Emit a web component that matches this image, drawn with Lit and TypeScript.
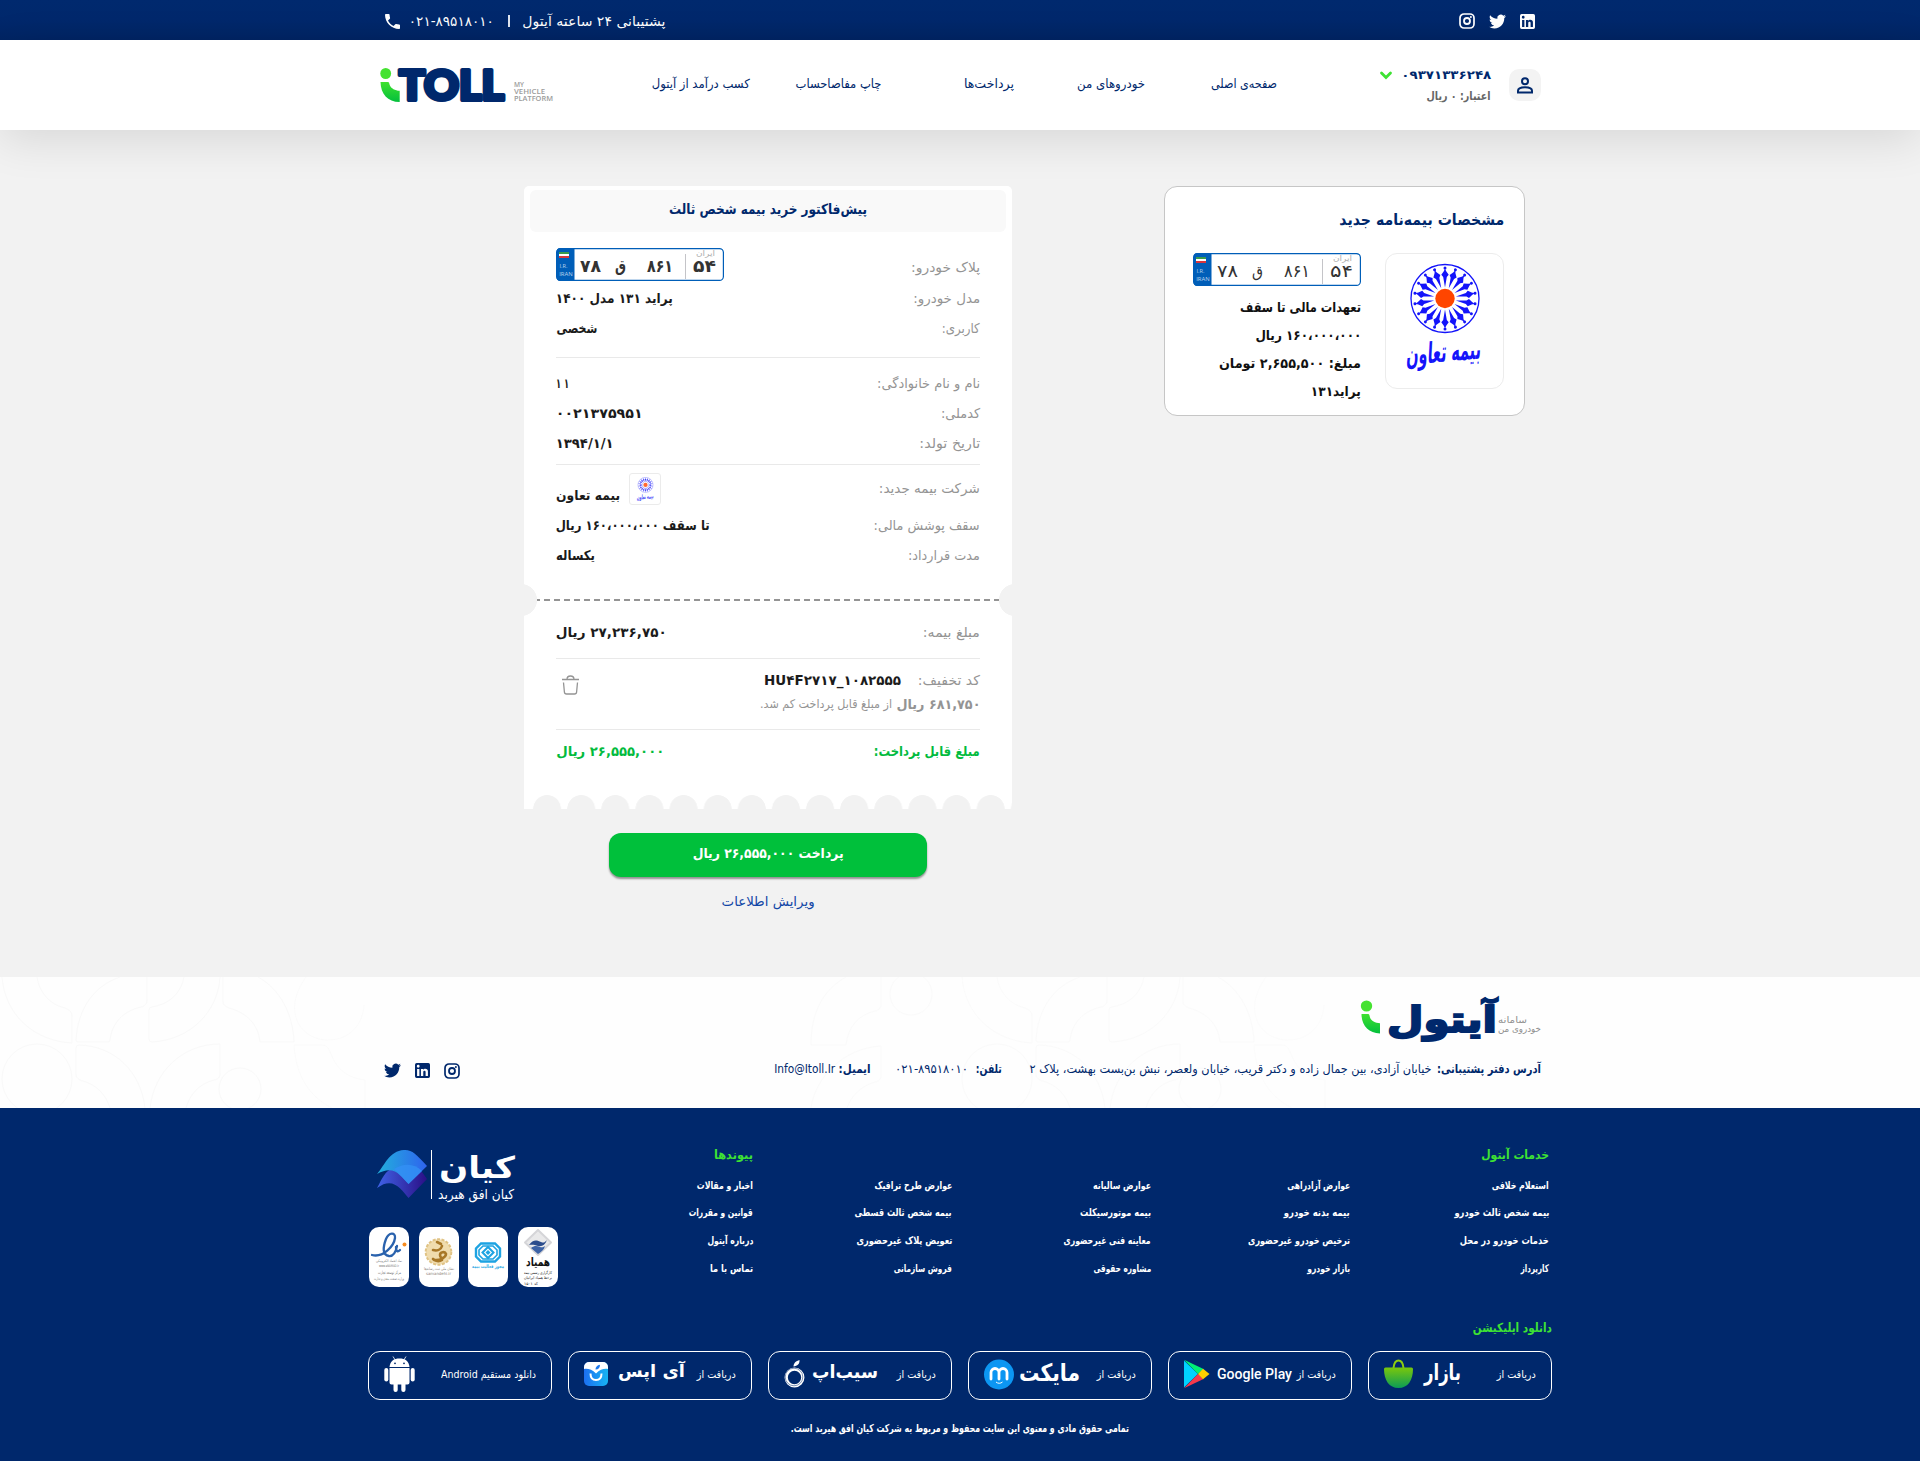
import { LitElement, html, css, svg } from "lit";
import { customElement, property } from "lit/decorators.js";

/** Single line of text condensed or widened to an exact measure. */
@customElement("fit-text")
class FitText extends LitElement {
  @property({ type: Number }) w = 0;

  static styles = css`
    :host { display: inline-flex; justify-content: center; flex: none; white-space: nowrap; }
    .inner { flex: none; display: inline-block; transform-origin: 50% 50%; }
  `;

  updated() {
    const inner = this.renderRoot.querySelector(".inner") as HTMLElement;
    this.style.width = `${this.w}px`;
    inner.style.transform = "none";
    const natural = inner.getBoundingClientRect().width;
    if (natural > 0) inner.style.transform = `scaleX(${this.w / natural})`;
  }

  render() {
    return html`<span class="inner"><slot></slot></span>`;
  }
}

const fit = (w: number, text: string, cls = "") => html`<fit-text class=${cls} .w=${w}>${text}</fit-text>`;

/** SVG text set to a fixed length, starting at its left edge. */
const label = (x: number, y: number, w: number, size: number, text: string, cls = "") =>
  svg`<text class=${"t " + cls} x=${x + w / 2} y=${y} font-size=${size} text-anchor="middle" textLength=${w} lengthAdjust="spacingAndGlyphs">${text}</text>`;

const twitter = html`<svg class="ico" width="17" height="17" viewBox="0 0 24 24"><path fill="currentColor" d="M23.953 4.57a10 10 0 01-2.825.775 4.958 4.958 0 002.163-2.723c-.951.555-2.005.959-3.127 1.184a4.92 4.92 0 00-8.384 4.482C7.69 8.095 4.067 6.13 1.64 3.162a4.822 4.822 0 00-.666 2.475c0 1.71.87 3.213 2.188 4.096a4.904 4.904 0 01-2.228-.616v.06a4.923 4.923 0 003.946 4.827 4.996 4.996 0 01-2.212.085 4.936 4.936 0 004.604 3.417 9.867 9.867 0 01-6.102 2.105c-.39 0-.779-.023-1.17-.067a13.995 13.995 0 007.557 2.209c9.053 0 13.998-7.496 13.998-13.985 0-.21 0-.42-.015-.63A9.935 9.935 0 0024 4.59z"/></svg>`;
const linkedin = html`<svg class="ico" width="15" height="15" viewBox="3 3 18 18"><path fill="currentColor" fill-rule="evenodd" d="M19 3a2 2 0 0 1 2 2v14a2 2 0 0 1-2 2H5a2 2 0 0 1-2-2V5a2 2 0 0 1 2-2h14m-.5 15.500v-5.300a3.260 3.260 0 0 0-3.260-3.260c-.85 0-1.840.52-2.320 1.300v-1.110h-2.790v8.370h2.790v-4.930c0-.77.62-1.400 1.390-1.400a1.400 1.400 0 0 1 1.400 1.400v4.930h2.790M6.880 8.560a1.680 1.680 0 0 0 1.680-1.680c0-.93-.75-1.690-1.680-1.690a1.690 1.690 0 0 0-1.690 1.690c0 .93.76 1.680 1.690 1.680m1.390 9.940v-8.370H5.500v8.370h2.770z"/></svg>`;
const instagram = html`<svg class="ico" width="16" height="16" viewBox="0 0 16 16" fill="none" stroke="currentColor"><rect x="1" y="1" width="14" height="14" rx="4" stroke-width="1.700"/><circle cx="8" cy="8" r="3" stroke-width="1.800"/><circle cx="11.900" cy="4.100" r="1" fill="currentColor" stroke="none"/></svg>`;
const phoneIcon = html`<svg class="ico" width="15" height="15" viewBox="3 3 18 18"><path fill="currentColor" d="M6.620 10.790c1.440 2.830 3.760 5.140 6.590 6.590l2.200-2.200c.27-.27.67-.36 1.020-.24 1.120.37 2.330.57 3.570.57.55 0 1 .45 1 1V20c0 .55-.45 1-1 1-9.390 0-17-7.610-17-17 0-.55.45-1 1-1h3.500c.55 0 1 .45 1 1 0 1.250.2 2.450.57 3.570.11.35.03.74-.25 1.020l-2.200 2.200z"/></svg>`;

const greenGradient = (id: string) => svg`<linearGradient id=${id} x1="0" y1="0" x2="0" y2="1"><stop offset="0" stop-color="#3fe12e"/><stop offset="1" stop-color="#03bf3c"/></linearGradient>`;

const logoEn = html`<svg class="ico" width="174" height="36" viewBox="0 0 174 36">
  <defs>${greenGradient("ge")}</defs>
  <ellipse cx="5.700" cy="6.500" rx="5.400" ry="5.600" fill="#45e231"/>
  <path d="M.5 15h7.200c1.800 0 1.300 1 2 3 1.400 3.600 5.400 5.600 10 5.800V35C7.500 35 .8 27 .5 15z" fill="url(#ge)"/>
  ${label(19, 33, 105, 41, "TOLL", "brand")}
  <g fill="#9b9b9b">
    ${label(134, 20, 10, 7, "MY", "tag")}${label(134, 27.200, 31, 7, "VEHICLE", "tag")}${label(134, 34.400, 39, 7, "PLATFORM", "tag")}
  </g>
</svg>`;

const logoFa = html`<svg class="ico" width="181" height="42" viewBox="0 0 181 42">
  <defs>${greenGradient("gf")}</defs>
  <ellipse cx="6.500" cy="5" rx="5.700" ry="5.600" fill="#45e231"/>
  <path d="M1.500 13H8c1.700 0 1.300 1.500 2 3.500 1.200 3.400 5.200 5.300 10 5.800V32.500C8.500 32 1.500 24.500 1.500 13z" fill="url(#gf)"/>
  ${label(27, 30.500, 110, 36, "آیتول", "brand-fa")}
  <g fill="#8f8f8f">${label(138, 22, 29, 9, "سامانه", "thin")}${label(138, 31, 43, 9, "خودروی من", "thin")}</g>
</svg>`;

const plate = (cls: string) => html`<svg class=${"plate " + cls} width="168" height="33" viewBox="0 0 168 33">
  <rect x=".6" y=".6" width="166.800" height="31.800" rx="4" fill="#fff" stroke="#005eb8" stroke-width="1.200"/>
  <path d="M18.500 0H4.500a4 4 0 0 0-4 4v25a4 4 0 0 0 4 4h14z" fill="#005eb8"/>
  <path d="M3 4h10v2H3z" fill="#3a9b4e"/><path d="M3 6h10v2H3z" fill="#fff"/><path d="M3 8h10v2H3z" fill="#d8363c"/>
  <g fill="#b9d3ec">${label(3.500, 19.500, 8, 5.500, "I.R.", "lat")}${label(3.200, 28, 13.500, 5.500, "IRAN", "lat")}</g>
  <g class="digits">
    ${label(24, 24, 21, 17, "۷۸")}${label(59, 24, 11, 16, "ق")}${label(91, 24, 26, 17, "۸۶۱")}${label(137, 24, 23, 17, "۵۴")}
  </g>
  <path d="M129.500 6v25" stroke="#c4c4c8"/>
  <g fill="#adadad">${label(140, 8, 19, 8, "ایران", "thin")}</g>
</svg>`;

const spokes = Array.from({ length: 18 }, (_, i) => i * 20);
const taavon = (cls: string) => html`<svg class=${cls} viewBox="0 0 76 108">
  <circle cx="38" cy="35.500" r="34" fill="none" stroke="#1414fa" stroke-width="1.300"/>
  ${spokes.map((a) => svg`<g transform=${`rotate(${a} 38 35.5) translate(-1 -.5)`} fill="#1414fa"><path d="M39 25l-1.800-10.500-1.900-2.200 2.500-3.600L39 6l1.200 2.700 2.500 3.600-1.900 2.200z"/><circle cx="39" cy="5.500" r="1.500"/></g>`)}
  <circle cx="38" cy="35.500" r="9.700" fill="#ff4500"/>
  <g fill="#1414fa" transform="translate(-1 102) skewX(-8) rotate(-5)">${label(0, 0, 74, 29, "بیمه تعاون", "callig")}</g>
</svg>`;

const row = (lw: number, l: string, vw: number, v: string, cls = "") => html`
  <div class=${"row " + cls}><span class="key">${fit(lw, l)}</span><span class="val">${fit(vw, v)}</span></div>`;

const nav: [string, number][] = [
  ["صفحه‌ی اصلی", 66], ["خودروهای من", 68], ["پرداخت‌ها", 50], ["چاپ مفاصاحساب", 86], ["کسب درآمد از آیتول", 98],
];

const columns: { title?: [string, number]; links: [string, number][] }[] = [
  { title: ["خدمات آیتول", 68], links: [["استعلام خلافی", 57], ["بیمه شخص ثالث خودرو", 95], ["خدمات خودرو در محل", 89], ["کارپرداز", 28]] },
  { links: [["عوارض آزادراهی", 63], ["بیمه بدنه خودرو", 66], ["ترخیص خودرو غیرحضوری", 102], ["بازار خودرو", 43]] },
  { links: [["عوارض سالیانه", 58], ["بیمه موتورسیکلت", 71], ["معاینه فنی غیرحضوری", 87], ["مشاوره حقوقی", 58]] },
  { links: [["عوارض طرح ترافیک", 78], ["بیمه شخص ثالث قسطی", 97], ["تعویض پلاک غیرحضوری", 96], ["فروش سازمانی", 58]] },
  { title: ["پیوندها", 39], links: [["اخبار و مقالات", 56], ["قوانین و مقررات", 64], ["درباره آیتول", 46], ["تماس با ما", 43]] },
];

const pattern = html`<svg class="pattern" width="1920" height="131" viewBox="0 0 1920 131" fill="none" stroke="#f9f9f9">
  ${[0, 1].map((k) => svg`<g transform=${`translate(${k * 960} 0)`} opacity=${k ? 0.6 : 1}>
    <circle cx="37" cy="102" r="35"/>
    <path d="M2 0c3 38 32 64 70 66V40c0-5-2-7-7-9C50 28 39 15 37 0"/>
    <path d="M76 63c2-32 18-54 44-63M147 0v22c0 5-2 7-6 8-18 4-29 16-31 33q0 2-2 2H78q-2 0-2-2"/>
    <path d="M184 0c-3 16-14 27-32 30q-3 0-3 3v29q0 3 3 3c38-2 66-30 68-65"/>
    <path d="M223 0v24c0 4 2 5 6 7 18 5 29 16 31 34h34c-1-28-14-53-36-65"/>
    <path d="M145 131c-4-36-30-62-66-63q-3 0-3 3v26c0 4 3 6 7 7 14 4 23 14 27 27"/>
    <path d="M150 131c4-36 32-64 70-64v29c0 5-2 6-6 7-15 4-24 14-28 28"/>
    <circle cx="240" cy="112" r="21"/>
    <path opacity=".6" d="M306 0c-25 35-5 63 22 63 22 0 35-16 36-35"/>
    <path opacity=".6" d="M294 68h28c5 0 7 4 9 9 6 16 17 24 34 26v28M294 68c2 32 16 52 38 63"/>
  </g>`)}
  <g opacity=".6"><circle cx="911" cy="17" r="21"/><path d="M811 68h35c2-18 12-30 29-34 4-1 6-3 6-7V0M811 68c0-33 12-55 35-68"/><path d="M811 131c4-30 32-60 70-62v30c0 3-2 5-6 6-14 4-24 14-28 26"/></g>
</svg>`;

const android = html`<svg class="ico" width="31" height="36" viewBox="0 0 31 36" fill="#fff">
  <path d="M5.500 11C6 5 10 2.500 15.500 2.500S25 5 25.500 11z"/><path d="M9 .5l2.500 4M22 .5l-2.500 4" stroke="#fff" stroke-width=".8"/>
  <path d="M5.500 12h20v14.500a2 2 0 0 1-2 2h-2V34a2.100 2.100 0 0 1-4.200 0v-5.500h-3.600V34a2.100 2.100 0 0 1-4.200 0v-5.500h-2a2 2 0 0 1-2-2z"/>
  <rect x=".3" y="12" width="4" height="13.500" rx="2"/><rect x="26.700" y="12" width="4" height="13.500" rx="2"/>
  <circle cx="11" cy="7.300" r=".9" fill="#00286c"/><circle cx="20" cy="7.300" r=".9" fill="#00286c"/>
</svg>`;
const iapps = html`<svg class="ico" width="102" height="26" viewBox="0 0 102 26">
  <defs><linearGradient id="ia" x1="0" x2="1"><stop stop-color="#1c6ff0"/><stop offset="1" stop-color="#17b4f3"/></linearGradient></defs>
  <rect y="1" width="24" height="24" rx="5" fill="url(#ia)"/><path d="M5 1h14a5 5 0 0 1 5 5v2c-4-.6-8 .4-12 4.500C8 8.400 4 7.400 0 8V6a5 5 0 0 1 5-5z" fill="#fff"/>
  <path d="M6.500 12.500c0 4 2 6.500 5.500 6.500s5.500-2.500 5.500-6.500" fill="none" stroke="#fff" stroke-width="2"/><path d="M11.500 8.500c0-2.500 1.500-4.300 4.500-4.800 0 3-1.500 4.800-4.500 4.800z" fill="#1b78f0"/>
  <g fill="#fff">${label(34, 16, 67, 17, "آی اپس", "mark")}</g>
</svg>`;
const sibapp = html`<svg class="ico" width="94" height="28" viewBox="0 0 94 28">
  <circle cx="10.500" cy="17.500" r="8.300" fill="none" stroke="#fff" stroke-width="3.300"/><circle cx="10" cy="17" r="8.800" fill="none" stroke="#00286c" stroke-width=".5"/><path d="M9.500 6.500C9.500 3 12 1 15.500 0c.2 4-2 6-6 6.500z" fill="#fff"/>
  <g fill="#fff">${label(28, 18, 66, 18, "سیب‌اپ", "mark")}</g>
</svg>`;
const myket = html`<svg class="ico" width="97" height="31" viewBox="0 0 97 31">
  <circle cx="15" cy="15.500" r="15" fill="#0c96f2"/><path d="M7 20v-6.500a4 4 0 0 1 8 0V20M15 13.500a4 4 0 0 1 8 0V20" fill="none" stroke="#fff" stroke-width="2.800" stroke-linecap="round"/><path d="M12 23c2 1.700 4.500 1.700 6.500 0" fill="none" stroke="#fff" stroke-width="1"/>
  <g fill="#fff">${label(35, 22, 61, 24, "مایکت", "mark")}</g>
</svg>`;
const google = html`<svg class="ico" width="108" height="30" viewBox="0 0 108 30">
  <path d="M0 1.500v27L14 15z" fill="#00d2ff"/><path d="M0 .8L19.500 10 14 15z" fill="#00f076"/><path d="M0 29.200L19.500 20 14 15z" fill="#f5394b"/><path d="M19 9.800l6.500 5.200-6.500 5.200-5-5.200z" fill="#ffcf00"/>
  <g fill="#fff">${label(33, 19.500, 75, 14.700, "Google Play", "gp")}</g>
</svg>`;
const bazaar = html`<svg class="ico" width="78" height="30" viewBox="0 0 78 30">
  <defs><linearGradient id="bz" x1="0" x2="0" y1="0" y2="1"><stop stop-color="#7ac70c"/><stop offset="1" stop-color="#0b9d56"/></linearGradient></defs>
  <path d="M9.500 9C10 4 11.500 1.500 14.500 1.500S19 4 19.500 9" fill="none" stroke="#8ccf10" stroke-width="2"/>
  <path d="M1.500 8.500h26q1.500 0 1.500 1.500C29 21 24 29 14.500 29S0 21 0 10q0-1.500 1.500-1.500z" fill="url(#bz)"/>
  <g fill="#fff">${label(40, 20.500, 37, 23, "بازار", "mark")}</g>
</svg>`;

const kian = html`<svg class="kian" width="140" height="56" viewBox="0 0 140 56">
  <defs>
    <linearGradient id="k1" x1="0" x2="1"><stop stop-color="#22b0dd"/><stop offset="1" stop-color="#2f63ee"/></linearGradient>
    <linearGradient id="k2" x1="0" x2="1"><stop stop-color="#3f62e6"/><stop offset="1" stop-color="#2b0f86"/></linearGradient>
  </defs>
  <path d="M0 39c5-9 8-18 17-20 8-6 18-6 23-3l10 14-18.500 19C24 40 16 27 0 39z" fill="url(#k2)"/>
  <path d="M0 25C8 16 12 2 27 1c8-.5 12 4 23 16L31.500 35C24 27 17 15 0 25z" fill="url(#k1)"/>
  <path d="M17 20c10-6 20-6 28 2L31.500 35z" fill="#3390f5" opacity=".8"/>
  <path d="M54.500 1v49" stroke="#fff" stroke-width="1"/>
  <g fill="#fff">${label(62, 29, 76, 30, "کیان", "mark")}${label(61, 50, 76, 13.500, "کیان افق هیربد", "mid")}</g>
</svg>`;

const badges = [
  html`<svg class="badge" width="40" height="60" viewBox="0 0 40 60"><path d="M20 3l13 12.500L20 28 7 15.500z" fill="#e9e9ea" stroke="#d5d5d8" stroke-linejoin="round" stroke-width="2"/><path d="M11 18c4-6 8-5 12-3 3 1.500 4 0 6-2-2 5-5 7-9 6-4-1.500-6-1.500-9-1z" fill="#2b4c8c"/><path d="M13 21c4-3 6-2 9-1 2 .6 3 .3 5-1-1 4-4 6-7 8z" fill="#3c62a6"/>
    <g fill="#111">${label(8, 39, 24, 12, "همیاد", "mark")}${label(6, 47, 28, 4, "کارگزاری رسمی بیمه")}${label(6, 52, 28, 4, "برخط همیاد ایرانیان")}${label(6, 57.500, 14, 4, "کد ۱۵۰۱")}</g></svg>`,
  html`<svg class="badge" width="40" height="60" viewBox="0 0 40 60"><g fill="none" stroke="#1da3e2" stroke-width="2.400"><path d="M13 16.500H27l5 5v8l-5 5H13l-5-5v-8z"/><path d="M15 19H25l4 4v5l-4 4H15l-4-4v-5z" stroke-width="1.600"/><path d="M20 20l5.500 5.500L20 31l-5.500-5.500z" fill="#fff" stroke-width="2"/></g><path d="M20 23l2.500 2.500L20 28l-2.500-2.500z" fill="#1da3e2"/>
    <g fill="#35ade6" class="bold">${label(4, 41, 32, 5, "مجوز فعالیت بیمه")}</g></svg>`,
  html`<svg class="badge" width="40" height="60" viewBox="0 0 40 60"><circle cx="19.500" cy="25" r="12.800" fill="#f0dcae" stroke="#e0c385" stroke-width="2" stroke-dasharray="3 1.500"/><path d="M18 15l4 2M14 23c4 1 8 0 9-4M15 33c6 1 12-3 12-6-1-3-6-2-6 1s3 3 2 5c-3 2-7 1-9-1" fill="none" stroke="#a87828" stroke-width="2.600" stroke-linecap="round"/>
    <g fill="#8b8378">${label(5, 43, 30, 4, "نشان ملی ثبت رسانه‌ها")}${label(7, 48, 25, 4, "samandehi.ir")}</g></svg>`,
  html`<svg class="badge" width="40" height="60" viewBox="0 0 40 60"><path d="M3 28c11 3 22-9 23-17 .6-6-6-6-9 1-3 8-4 16 3 17 5 .5 7-5 8-10M27 20c0 5 2 5 4 3" fill="none" stroke="#2a62ad" stroke-width="2.300" stroke-linecap="round"/><circle cx="35.500" cy="17.500" r="2" fill="#f58a1f"/>
    <g fill="#777">${label(7, 35, 26, 3.500, "نماد اعتماد الکترونیکی")}${label(10, 39.500, 20, 3.500, "www.eNAMAD.ir")}${label(9, 47, 23, 4.500, "مرکز توسعه تجارت")}${label(5, 53, 30, 4, "وزارت صنعت، معدن و تجارت")}</g></svg>`,
];

@customElement("app-root")
class AppRoot extends LitElement {
  static styles = css`
    :host { display: block; width: 1920px; height: 1461px; direction: rtl; overflow: hidden; background: #f2f2f2;
      font-family: "DejaVu Sans", "Noto Sans", sans-serif; font-size: 13px; color: #00286c; }
    * { box-sizing: border-box; }
    svg { display: block; flex: none; direction: ltr; overflow: visible; }
    .t { font-family: "DejaVu Sans", sans-serif; }
    .brand { font-family: "Lato", "Inter", sans-serif; font-weight: 900; fill: #00286c; stroke: #00286c; stroke-width: 4; stroke-linejoin: round; }
    .tag { font-family: "Open Sans", sans-serif; font-weight: 600; }
    .brand-fa { font-weight: 700; fill: #00286c; stroke: #00286c; stroke-width: 2; }
    .mark { font-weight: 700; }
    .callig { font-weight: 700; }
    .lat { font-family: "Open Sans", sans-serif; }
    .gp { font-family: Roboto, "Open Sans", sans-serif; font-weight: 500; }
    .bold { font-weight: 700; }

    .topbar { height: 40px; background: linear-gradient(#00296e, #00286c 50%, #002463); color: #fff; }
    .wrap { width: 1162px; margin: 0 auto; display: flex; align-items: center; }
    .topbar .wrap { height: 40px; padding: 2px 6px 0 6px; justify-content: space-between; }
    .cluster { display: flex; align-items: center; gap: 14px; }
    .support { display: flex; align-items: center; font-size: 13.500px; }
    .support .sep { margin: 0 13px 0 14px; width: 1.500px; height: 12px; background: #dfe5ef; }
    .support .num { margin-left: 9px; direction: ltr; }

    .header { height: 90px; background: #fff; position: relative; box-shadow: 0 10px 45px rgba(0, 0, 0, .11); }
    .header .wrap { height: 90px; }
    .avatar { width: 32px; height: 32px; border-radius: 10px; background: #f3f3f3; display: grid; place-items: center; margin-left: 18px; }
    .account { width: 111px; display: flex; flex-direction: column; gap: 1px; line-height: 20px; font-size: 12px; font-weight: 700; margin-left: 103px; }
    .account .line { display: flex; align-items: center; gap: 9px; }
    .credit { color: #666; font-size: 11.500px; }
    .nav { display: grid; grid-template-columns: repeat(5, 131.750px); line-height: 20px; font-size: 12.500px; width: 658.750px; margin-left: 64px; padding-bottom: 3px; }

    .main { height: 847px; padding-top: 56px; }
    .content { width: 1130px; margin: 0 auto; display: flex; align-items: flex-start; gap: 152px; }
    .policy { width: 361px; height: 230px; background: #fff; border: 1px solid #c6c6c6; border-radius: 13px; padding: 19px 20px 0; }
    .policy h2 { margin: 0; font-size: 15.500px; line-height: 28px; height: 47px; font-weight: 700; }
    .policy .body { display: flex; gap: 24px; color: #111; }
    .policy .brandbox { width: 119px; height: 136px; border: 1px solid #ececec; border-radius: 12px; padding-top: 9px; display: flex; justify-content: center; }
    .brandsvg { width: 76px; height: 108px; }
    .policy .lines { display: flex; flex-direction: column; font-weight: 700; font-size: 13.500px; line-height: 28px; align-items: flex-start; }
    .policy .plate { margin-bottom: 7px; font-weight: 400; }
    .digits { fill: #333; }
    .strong .digits { font-weight: 700; }

    .side { width: 488px; display: flex; flex-direction: column; align-items: center; }
    .receipt { position: relative; width: 488px; height: 623px; background: #fff; border-radius: 5px 5px 0 0; overflow: hidden; }
    .title { margin: 4px 6px 16px; height: 42px; border-radius: 6px; background: #f9f9f9; display: flex; align-items: center; justify-content: center; font-weight: 700; font-size: 14px; padding-bottom: 4px; }
    .group { margin: 0 32px; border-bottom: 1px solid #e9e9e9; }
    .row { height: 30px; display: flex; align-items: center; justify-content: space-between; line-height: 20px; }
    .key { color: #949494; font-size: 13.500px; }
    .val { color: #1b1b1b; font-weight: 700; font-size: 13.500px; }
    .row.first { height: 35px; align-items: flex-start; }
    .row.first .key { padding-top: 9px; }
    .g1 { height: 110px; }
    .g2 { height: 107px; padding-top: 10px; }
    .g3 { height: 119px; border: 0; }
    .company { height: 45px; display: flex; justify-content: space-between; }
    .company .key { padding-top: 13px; line-height: 20px; }
    .company .val { display: flex; gap: 9px; line-height: 20px; }
    .company .val fit-text { padding-top: 20px; }
    .mini { margin-top: 8px; width: 32px; height: 32px; border: 1px solid #ebebeb; border-radius: 3px; display: grid; place-items: center; }
    .minisvg { width: 17px; height: 24px; opacity: .8; }
    .tear { height: 32px; display: flex; align-items: center; justify-content: space-between; background: repeating-linear-gradient(to right, #949494 0 6px, transparent 6px 10px) 10px 15px / 470px 2px no-repeat; }
    .notch { width: 13px; height: 32px; flex: none; }
    .notch.r { background: radial-gradient(circle at 16px 16px, #f2f2f2 15.700px, transparent 16.300px); }
    .notch.l { background: radial-gradient(circle at -3px 16px, #f2f2f2 15.700px, transparent 16.300px); }
    .g4 { height: 43px; padding-top: 1px; }
    .g5 { height: 71px; display: flex; justify-content: space-between; padding: 11px 0 0 6px; }
    .code { display: flex; gap: 17px; line-height: 20px; }
    .code .id { direction: ltr; }
    .saved { display: flex; gap: 4px; line-height: 20px; color: #949494; margin-top: 4px; font-weight: 700; font-size: 13.500px; }
    .saved .rest { font-weight: 400; font-size: 12px; }
    .trash { margin-top: 5px; }
    .g6 { height: 65px; border: 0; padding-top: 6px; }
    .g6 .key, .g6 .val { color: #03bb3e; font-weight: 700; font-size: 13.500px; }
    .scallop { height: 14px; width: 482.500px; background: radial-gradient(circle at 17.070px 14px, #f2f2f2 13.600px, transparent 14.200px) 0 0 / 34.130px 14px repeat-x; }
    .pay { margin-top: 24px; width: 318px; height: 44px; border: 0; border-radius: 12px; background: #00c03b; color: #fff; display: flex; align-items: center; justify-content: center; font: 700 13.500px "DejaVu Sans", sans-serif; padding: 0 0 4px; box-shadow: 0 2px 2px rgba(0, 0, 0, .4); }
    .edit { margin-top: 14px; line-height: 20px; color: #1247a6; font-size: 13.500px; }

    .contact { height: 131px; background: #fefefe; position: relative; overflow: hidden; }
    .pattern { position: absolute; left: 0; top: 0; }
    .contact .inner { position: relative; width: 1162px; margin: 0 auto; padding-top: 24px; display: flex; flex-direction: column; align-items: flex-start; }
    .info { margin-top: 15px; width: 1162px; padding-left: 5px; display: flex; align-items: center; height: 22px; font-size: 12px; line-height: 20px; }
    .info .g5x { width: 5px; } .info .g27 { width: 28px; } .info .g8 { width: 8px; } .info .g25 { width: 24px; } .info .gm { width: 4px; }
    .info .end { margin-right: auto; display: flex; gap: 14px; align-items: center; padding-top: 3px; }
    .ltr { direction: ltr; }

    .foot { height: 353px; background: #00286c; color: #fff; }
    .foot .in { width: 1184px; margin: 0 auto; }
    .top { display: flex; height: 210px; padding: 37px 3px 0 0; }
    .col { width: 199px; flex: none; display: flex; flex-direction: column; align-items: flex-start; line-height: 20px; font-size: 10.500px; font-weight: 700; }
    .col .h { height: 29.500px; color: #3ee233; font-size: 12.500px; line-height: 20px; }
    .col .a { height: 27.700px; }
    .col:nth-child(5) { width: 195px; }
    .partners { width: 190px; flex: none; padding-top: 4px; direction: ltr; }
    .kian { margin-left: 9px; }
    .badges { display: flex; flex-direction: row-reverse; gap: 9.670px; margin-top: 22px; width: 190px; }
    .badge { background: #fff; border-radius: 10px; }
    .dl { color: #3ee233; font-weight: 700; font-size: 12.500px; line-height: 20px; height: 33px; }
    .stores { display: flex; gap: 16px; }
    .store { width: 184px; height: 49px; border: 1px solid #fff; border-radius: 12px; display: flex; align-items: center; justify-content: space-between; padding: 0 15px 3px; font-size: 10.500px; line-height: 20px; }
    .copy { margin-top: 19px; text-align: center; font-size: 11px; font-weight: 700; line-height: 20px; }
  `;

  render() {
    const from = fit(39, "دریافت از");
    return html`
      <div class="topbar"><div class="wrap">
        <div class="cluster">${linkedin}${twitter}${instagram}</div>
        <div class="support">${fit(143, "پشتیبانی ۲۴ ساعته آیتول")}<span class="sep"></span><span class="num">${fit(85, "۰۲۱-۸۹۵۱۸۰۱۰")}</span>${phoneIcon}</div>
      </div></div>

      <div class="header"><div class="wrap">
        <div class="avatar"><svg width="16" height="17" viewBox="0 0 16 17" fill="none" stroke="#00286c" stroke-width="2"><circle cx="8" cy="4.300" r="3"/><path d="M1 15.500v-1.700C1 11.500 4.500 10.300 8 10.300s7 1.200 7 3.500v1.700z"/></svg></div>
        <div class="account">
          <div class="line"><span class="ltr">${fit(90, "۰۹۳۷۱۳۳۶۲۴۸")}</span><svg width="12" height="8" viewBox="0 0 12 8" fill="none" stroke="#3ee233" stroke-width="2.800" stroke-linecap="round"><path d="M1.500 2L6 6.500l4.500-4.500"/></svg></div>
          <div class="credit">${fit(64, "اعتبار: ۰ ریال")}</div>
        </div>
        <div class="nav">${nav.map(([t, w]) => html`<span>${fit(w, t)}</span>`)}</div>
        ${logoEn}
      </div></div>

      <div class="main"><div class="content">
        <div class="policy">
          <h2>${fit(165, "مشخصات بیمه‌نامه جدید")}</h2>
          <div class="body">
            <div class="brandbox">${taavon("brandsvg")}</div>
            <div class="lines">${plate("")}${fit(121, "تعهدات مالی تا سقف")}${fit(106, "۱۶۰،۰۰۰،۰۰۰ ریال")}${fit(142, "مبلغ: ۲,۶۵۵,۵۰۰ تومان")}${fit(50, "پراید۱۳۱")}</div>
          </div>
        </div>

        <div class="side">
          <div class="receipt">
            <div class="title">${fit(198, "پیش‌فاکتور خرید بیمه شخص ثالث")}</div>
            <div class="group g1">
              <div class="row first"><span class="key">${fit(69, "پلاک خودرو:")}</span>${plate("strong")}</div>
              ${row(67, "مدل خودرو:", 117, "پراید ۱۳۱ مدل ۱۴۰۰")}${row(38, "کاربری:", 41, "شخصی")}
            </div>
            <div class="group g2">${row(103, "نام و نام خانوادگی:", 13, "۱ ۱")}${row(39, "کدملی:", 87, "۰۰۲۱۳۷۵۹۵۱")}${row(61, "تاریخ تولد:", 58, "۱۳۹۴/۱/۱")}</div>
            <div class="group g3">
              <div class="company"><span class="key">${fit(101, "شرکت بیمه جدید:")}</span><span class="val"><span class="mini">${taavon("minisvg")}</span>${fit(64, "بیمه تعاون")}</span></div>
              ${row(106, "سقف پوشش مالی:", 154, "تا سقف ۱۶۰،۰۰۰،۰۰۰ ریال")}${row(72, "مدت قرارداد:", 39, "یکساله")}
            </div>
            <div class="tear"><span class="notch r"></span><span class="notch l"></span></div>
            <div class="group g4">${row(57, "مبلغ بیمه:", 111, "۲۷,۲۳۶,۷۵۰ ریال")}</div>
            <div class="group g5">
              <div>
                <div class="code"><span class="key">${fit(62, "کد تخفیف:")}</span><span class="val id">${fit(137, "HU۴F۲۷۱۷_۱۰۸۲۵۵۵")}</span></div>
                <div class="saved">${fit(84, "۶۸۱,۷۵۰ ریال")}${fit(132, "از مبلغ قابل پرداخت کم شد.", "rest")}</div>
              </div>
              <svg class="trash" width="17" height="20" viewBox="0 0 17 20" fill="none" stroke="#949494" stroke-width="1.300"><path d="M0 4.500h17M5 4.500c0-2.500 1-3.500 3.500-3.500S12 2 12 4.500M1.500 7.500l.9 9.500c.1 1.300.9 2 2.100 2h8c1.200 0 2-.7 2.100-2l.9-9.500"/></svg>
            </div>
            <div class="group g6">${row(106, "مبلغ قابل پرداخت:", 108, "۲۶,۵۵۵,۰۰۰ ریال")}</div>
            <div class="scallop"></div>
          </div>
          <button class="pay">${fit(151, "پرداخت ۲۶,۵۵۵,۰۰۰ ریال")}</button>
          <div class="edit">${fit(93, "ویرایش اطلاعات")}</div>
        </div>
      </div></div>

      <div class="contact">${pattern}
        <div class="inner">${logoFa}
          <div class="info">
            ${fit(104, "آدرس دفتر پشتیبانی:", "bold")}<span class="g5x"></span>${fit(402, "خیابان آزادی، بین جمال زاده و دکتر قریب، خیابان ولعصر، نبش بن‌بست بهشت، پلاک ۲")}
            <span class="g27"></span>${fit(26, "تلفن:", "bold")}<span class="g8"></span><span class="ltr">${fit(73, "۰۲۱-۸۹۵۱۸۰۱۰")}</span>
            <span class="g25"></span>${fit(32, "ایمیل:", "bold")}<span class="gm"></span><span class="ltr">${fit(61, "Info@Itoll.Ir")}</span>
            <span class="end">${instagram}${linkedin}${twitter}</span>
          </div>
        </div>
      </div>

      <div class="foot"><div class="in">
        <div class="top">
          ${columns.map((c) => html`<div class="col"><div class="h">${c.title ? fit(c.title[1], c.title[0]) : ""}</div>${c.links.map(([t, w]) => html`<div class="a">${fit(w, t)}</div>`)}</div>`)}
          <div class="partners">${kian}<div class="badges">${badges}</div></div>
        </div>
        <div class="dl">${fit(79, "دانلود اپلیکیشن")}</div>
        <div class="stores">
          <div class="store">${from}${bazaar}</div>
          <div class="store">${from}${google}</div>
          <div class="store">${from}${myket}</div>
          <div class="store">${from}${sibapp}</div>
          <div class="store">${from}${iapps}</div>
          <div class="store">${fit(95, "دانلود مستقیم Android")}${android}</div>
        </div>
        <div class="copy">${fit(338, "تمامی حقوق مادی و معنوی این سایت محفوظ و مربوط به شرکت کیان افق هیربد است.")}</div>
      </div></div>
    `;
  }
}
